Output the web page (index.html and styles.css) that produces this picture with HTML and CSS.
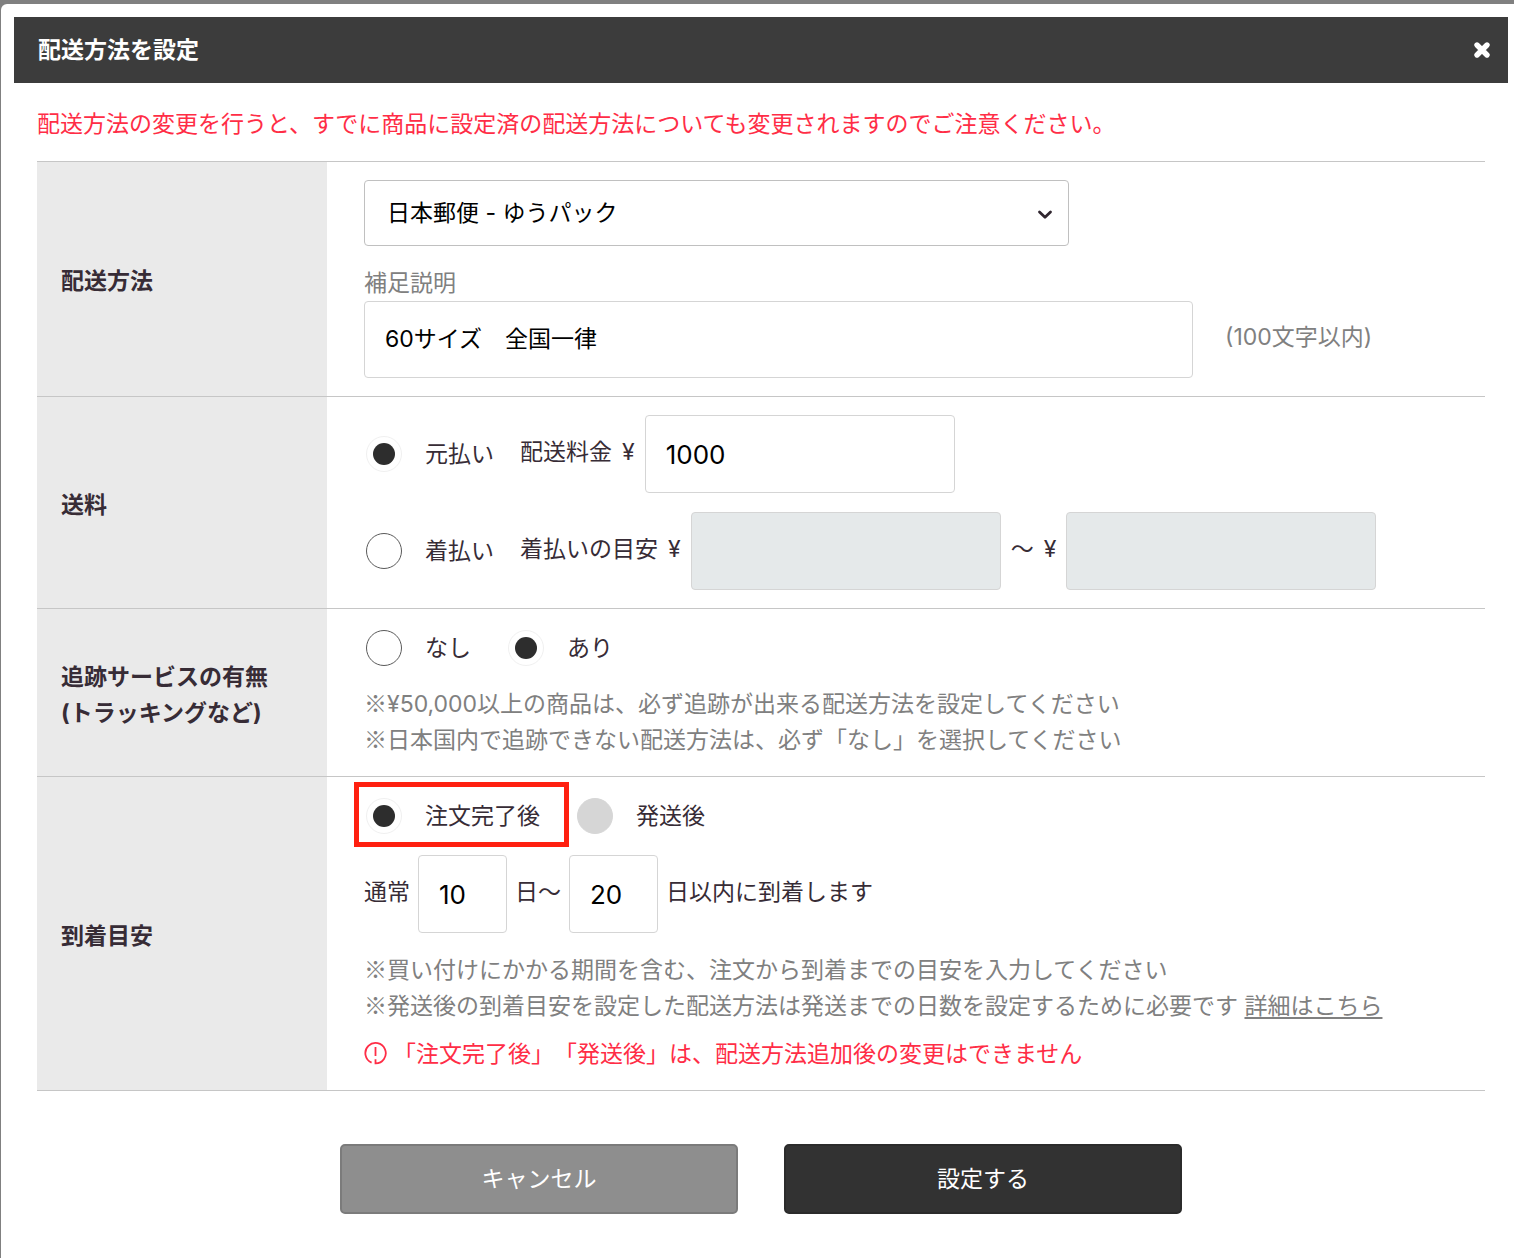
FILE: index.html
```html
<!DOCTYPE html>
<html lang="ja">
<head>
<meta charset="utf-8">
<meta name="viewport" content="width=device-width, initial-scale=1">
<title>配送方法を設定</title>
<link rel="stylesheet" href="styles.css">
</head>
<body>
<main class="modal">
  <header class="modal-header">
    <h1 class="modal-title">配送方法を設定</h1>
    <button class="close" type="button" aria-label="閉じる">
      <svg width="18" height="18" viewBox="0 0 18 18" aria-hidden="true"><path d="M4 4L14 14M14 4L4 14" stroke="#fff" stroke-width="5.4" stroke-linecap="round" fill="none"/></svg>
    </button>
  </header>
  <form class="modal-body">
    <p class="warning">配送方法の変更を行うと、すでに商品に設定済の配送方法についても変更されますのでご注意ください。</p>
    <table class="settings">
      <tr>
        <th scope="row"><label for="method">配送方法</label></th>
        <td>
          <div class="select-box">
            <select id="method" class="select"><option>日本郵便 - ゆうパック</option></select>
            <svg class="chevron" width="16" height="10" viewBox="0 0 16 10" aria-hidden="true"><path d="M2.5 2L8 7.2L13.5 2" stroke="#30262f" stroke-width="2.8" stroke-linecap="round" stroke-linejoin="round" fill="none"/></svg>
          </div>
          <label class="caption" for="memo">補足説明</label>
          <div class="memo-row">
            <input id="memo" class="field field-memo" type="text" maxlength="100" value="60サイズ　全国一律">
            <span class="unit muted">(100文字以内)</span>
          </div>
        </td>
      </tr>
      <tr>
        <th scope="row">送料</th>
        <td>
          <div class="fees">
            <div class="fee-row">
              <label class="choice choice-fee"><input class="radio" type="radio" name="payment" checked>元払い</label>
              <label class="unit" for="fee">配送料金</label><span class="unit">¥</span>
              <input id="fee" class="field field-fee number" type="text" value="1000">
            </div>
            <div class="fee-row">
              <label class="choice choice-fee"><input class="radio" type="radio" name="payment">着払い</label>
              <label class="unit" for="cod-min">着払いの目安</label><span class="unit">¥</span>
              <input id="cod-min" class="field field-fee" type="text" disabled>
              <span class="unit">〜</span><span class="unit">¥</span>
              <input class="field field-fee" type="text" aria-label="着払いの目安 上限" disabled>
            </div>
          </div>
        </td>
      </tr>
      <tr>
        <th scope="row">追跡サービスの有無<br>(トラッキングなど)</th>
        <td>
          <div class="choices">
            <label class="choice"><input class="radio" type="radio" name="tracking">なし</label>
            <label class="choice"><input class="radio" type="radio" name="tracking" checked>あり</label>
          </div>
          <p class="notes notes-tracking"><span class="mark">※</span>¥50,000以上の商品は、必ず追跡が出来る配送方法を設定してください<br><span class="mark">※</span>日本国内で追跡できない配送方法は、必ず「なし」を選択してください</p>
        </td>
      </tr>
      <tr>
        <th scope="row">到着目安</th>
        <td>
          <div class="choices">
            <label class="choice highlighted"><input class="radio" type="radio" name="arrival" checked>注文完了後</label>
            <label class="choice"><input class="radio" type="radio" name="arrival" disabled>発送後</label>
          </div>
          <div class="days-row">
            <label class="unit" for="days-min">通常</label>
            <input id="days-min" class="field field-days number" type="text" value="10">
            <label class="unit" for="days-max">日〜</label>
            <input id="days-max" class="field field-days number" type="text" value="20">
            <span class="unit">日以内に到着します</span>
          </div>
          <p class="notes"><span class="mark">※</span>買い付けにかかる期間を含む、注文から到着までの目安を入力してください<br><span class="mark">※</span>発送後の到着目安を設定した配送方法は発送までの日数を設定するために必要です <a class="link" href="#">詳細はこちら</a></p>
          <p class="alert">
            <svg class="alert-icon" width="23" height="24" viewBox="0 0 23 24" aria-hidden="true"><path d="M7.6 21.6A10.2 10.2 0 1 1 11.5 22.4V18.2M11.5 6v9" stroke="#ff2d46" stroke-width="1.8" fill="none"/></svg>
            <span>「注文完了後」「発送後」は、配送方法追加後の変更はできません</span>
          </p>
        </td>
      </tr>
    </table>
    <div class="actions">
      <button class="button button-cancel" type="button">キャンセル</button>
      <button class="button button-submit" type="submit">設定する</button>
    </div>
  </form>
</main>
</body>
</html>
```
FILE: styles.css
```css
* {
  box-sizing: border-box;
}

body {
  margin: 0;
  padding: 4px 0 0 1px;
  background: #808080;
  color: #372c36;
  font: 23px/36px Inter, "Noto Sans CJK JP", sans-serif;
  text-spacing-trim: space-all;
}

h1,
p {
  margin: 0;
}

input,
select,
button {
  margin: 0;
  font: inherit;
}

.modal {
  min-height: calc(100vh - 4px);
  padding: 13px 6px 44px 13px;
  background: #fff;
  border-radius: 6px 0 0 0;
}

.modal-header {
  display: flex;
  align-items: center;
  justify-content: space-between;
  height: 66px;
  padding: 0 17px 0 24px;
  background: #3c3c3c;
  color: #fff;
}

.modal-title {
  font-size: 23px;
  font-weight: 700;
}

.close {
  display: flex;
  padding: 0;
  border: 0;
  background: none;
  cursor: pointer;
}

.modal-body {
  padding: 23px 23px 0;
}

.warning {
  margin-bottom: 19px;
  color: #ff2d46;
}

.settings {
  width: 100%;
  border-spacing: 0;
  border-bottom: 1px solid #c6c6c6;
}

.settings th,
.settings td {
  border-top: 1px solid #c6c6c6;
  text-align: left;
  vertical-align: middle;
}

.settings th {
  width: 290px;
  padding: 4px 0 0 24px;
  background: #eaeaea;
  font-weight: 700;
}

.settings td {
  padding: 18px 0 18px 37px;
}

.select-box {
  position: relative;
  width: 705px;
  max-width: 100%;
  margin-bottom: 19px;
}

.select {
  display: block;
  width: 100%;
  height: 66px;
  padding: 0 48px 0 22px;
  border: 1px solid #c0c0c0;
  border-radius: 4px;
  background: #fff;
  color: #000;
  appearance: none;
}

.chevron {
  position: absolute;
  top: 30px;
  right: 16px;
  pointer-events: none;
}

.caption {
  display: block;
  color: #808080;
}

.muted {
  color: #808080;
}

.field {
  height: 78px;
  padding: 0 20px;
  border: 1px solid #d5d5d5;
  border-radius: 4px;
  background: #fff;
  color: #000;
}

.field:disabled {
  background: #e5e9ea;
}

.field-memo {
  width: 829px;
  height: 77px;
  padding-bottom: 5px;
}

.field-fee {
  width: 310px;
}

.field-days {
  width: 89px;
}

.number {
  font-size: 26px;
}

.unit {
  padding-bottom: 5px;
}

.memo-row {
  display: flex;
  align-items: center;
  gap: 32px;
}

.fees {
  display: flex;
  flex-direction: column;
  gap: 19px;
}

.fee-row {
  display: flex;
  align-items: center;
  gap: 10px;
}

.choices {
  display: flex;
  gap: 37px;
  height: 42px;
  margin-left: 2px;
}

.choice {
  display: flex;
  align-items: center;
  gap: 23px;
}

.choice-fee {
  width: 144px;
  margin-left: 2px;
}

.radio {
  width: 36px;
  height: 36px;
  padding: 6px;
  border: 1px solid #5a5a5a;
  border-radius: 50%;
  background: #fff;
  appearance: none;
}

.radio:checked {
  border-color: #f0f0f0;
  background: #2d2d2d content-box;
}

.radio:disabled {
  border-color: #d6d6d6;
  background: #d6d6d6;
}

.highlighted {
  position: relative;
}

.highlighted::after {
  content: "";
  position: absolute;
  inset: -13px -29px -10px -12px;
  border: 5px solid #ff2010;
  pointer-events: none;
}

.days-row {
  display: flex;
  align-items: center;
  gap: 8px;
  margin: 18px 0 19px;
}

.notes {
  color: #808080;
}

.notes-tracking {
  margin-top: 17px;
}

.mark {
  font-family: "Noto Sans CJK JP", sans-serif;
  line-height: 1;
}

.link {
  color: inherit;
  text-decoration-thickness: 2px;
  text-underline-offset: 3px;
}

.alert {
  display: flex;
  align-items: center;
  gap: 6px;
  margin-top: 12px;
  color: #ff2d46;
}

.alert-icon {
  margin-bottom: 3px;
}

.actions {
  display: flex;
  justify-content: center;
  gap: 46px;
  margin-top: 53px;
}

.button {
  width: 398px;
  height: 70px;
  border: 2px solid #2b2b2b;
  border-radius: 5px;
  background: #323232;
  color: #fff;
  cursor: pointer;
}

.button-cancel {
  border-color: #7b7b7b;
  background: #8e8e8e;
}
```
